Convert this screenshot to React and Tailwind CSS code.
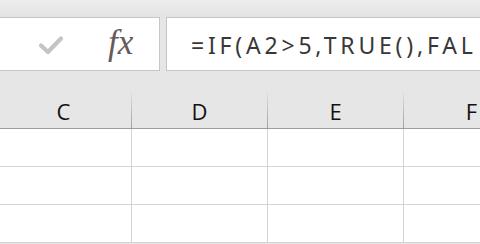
import React from 'react';

const columns = ['C', 'D', 'E', 'F'];
const rows = [1, 2, 3];

const CheckMark = () => (
  <svg width="26" height="20" viewBox="0 0 26 20" fill="none">
    <path
      d="M3 10.5 L10 17 L23 3.5"
      stroke="#c4c4c4"
      strokeWidth="4.2"
      strokeLinecap="round"
      strokeLinejoin="round"
    />
  </svg>
);

const App = () => {
  return (
    <div className="w-[480px] h-[244px] overflow-hidden bg-[#e6e6e6] font-['Open_Sans',sans-serif]">
      {/* ribbon edge */}
      <div className="h-[17px] bg-gradient-to-b from-[#eeeeee] to-[#e3e3e3]" />

      {/* formula bar */}
      <div className="flex h-[54px] gap-[6px]">
        <div className="ml-[-1px] w-[161px] shrink-0 flex items-center border border-[#c6c6c6] bg-white">
          <div className="ml-[38px] mt-[2px]">
            <CheckMark />
          </div>
          <span className="ml-[44px] mb-[4px] font-['Liberation_Serif',serif] italic text-[35px] leading-none text-[#665a5a]">
            fx
          </span>
        </div>
        <div className="flex-1 flex items-center border border-r-0 border-[#c6c6c6] bg-white overflow-hidden">
          <span className="ml-[24px] mt-[2px] whitespace-nowrap text-[23px] tracking-[3.8px] leading-none text-[#383838] font-['Noto_Sans',sans-serif]">
            =IF(A2&gt;5,TRUE(),FAL
          </span>
        </div>
      </div>

      <div className="h-[20px]" />

      {/* column headers */}
      <div className="flex ml-[-4px] h-[38px] border-b border-[#9c9c9c]">
        {columns.map((c) => (
          <div key={c} className="w-[136px] shrink-0 flex">
            <div className="flex-1 flex items-center justify-center pt-[3px] text-[22px] leading-none text-[#111]">
              {c}
            </div>
            <div className="w-px self-stretch bg-gradient-to-b from-[#e2e2e2] to-[#a0a0a0]" />
          </div>
        ))}
      </div>

      {/* grid */}
      <div className="bg-white">
        {rows.map((r) => (
          <div key={r} className="flex ml-[-4px] h-[38px] border-b border-[#d4d4d4]">
            {columns.map((c) => (
              <div key={c} className="w-[136px] shrink-0 border-r border-[#d4d4d4]" />
            ))}
          </div>
        ))}
      </div>
    </div>
  );
};

export default App;
